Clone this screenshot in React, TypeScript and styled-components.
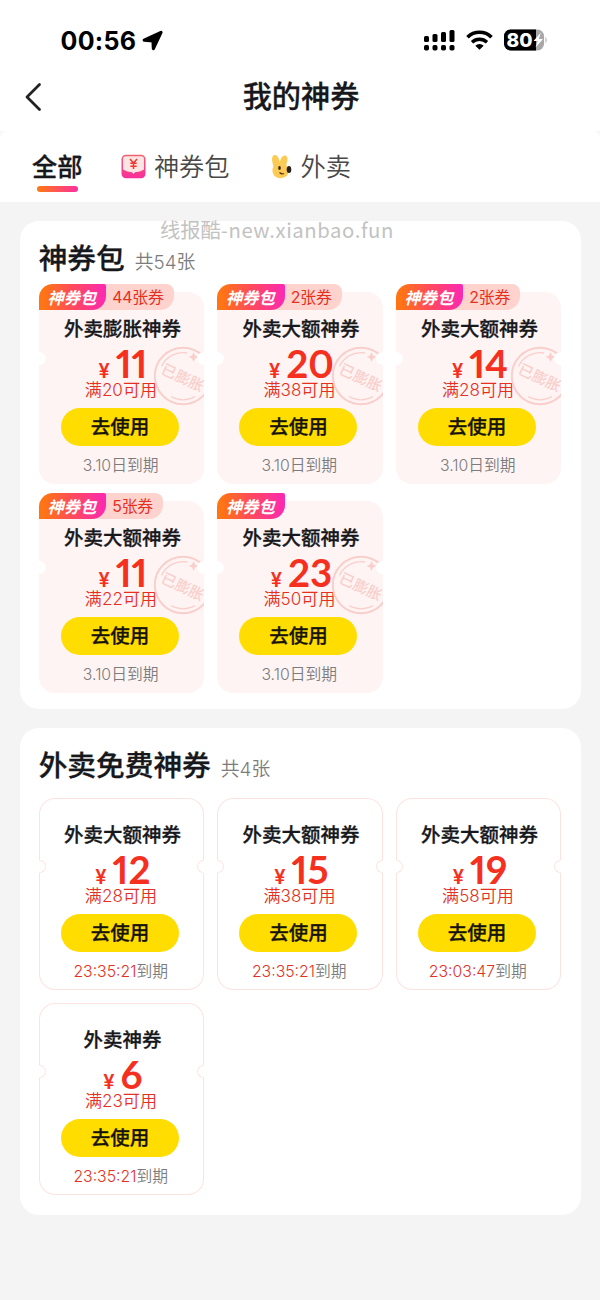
import React from "react";
import styled, { createGlobalStyle, css } from "styled-components";

const sans = `Inter, "Noto Sans CJK SC", sans-serif`;

const GlobalStyle = createGlobalStyle`
  * { box-sizing: border-box; }
  body { margin: 0; background: #f4f4f4; }
`;

const semibold = css`
  font-weight: 500;
  -webkit-text-stroke: 0.3px currentColor;
`;

const Page = styled.div`
  width: 600px;
  min-height: 1300px;
  background: #f4f4f4;
  font-family: ${sans};
  color: #16181c;
  position: relative;
`;

const Top = styled.header`
  background: #fff;
`;

const StatusBar = styled.div`
  height: 62px;
  padding: 20px 52px 0 60.5px;
  display: flex;
  justify-content: space-between;
`;

const Clock = styled.div`
  display: flex;
  align-items: center;
  gap: 6px;
  height: 42px;
  font-size: 25px;
  font-weight: 750;
  letter-spacing: 0.3px;
  color: #000;
`;

const Indicators = styled.div`
  display: flex;
  align-items: center;
  gap: 11px;
  height: 40px;
`;

const NavBar = styled.div`
  height: 69px;
  display: grid;
  grid-template-columns: 60px 1fr 60px;
  align-items: center;
  & > svg { margin-left: 24px; }
`;

const NavTitle = styled.h1`
  margin: 1px 0 0 2px;
  text-align: center;
  font-size: 29.2px;
  line-height: 40px;
  ${semibold}
`;

const TabsBackdrop = styled.div`
  background: #f8f8f8;
`;

const Tabs = styled.nav`
  height: 71px;
  padding: 17px 32px 0;
  display: flex;
  background: #fff;
  border-radius: 8px 8px 0 0;
`;

const Tab = styled.div<{ $active?: boolean; $gap?: number }>`
  display: flex;
  flex-direction: column;
  align-items: center;
  margin-right: ${(p) => p.$gap ?? 0}px;
  font-size: 25.2px;
  line-height: 38px;
  color: ${(p) => (p.$active ? "#16181c" : "#484848")};
  ${(p) => (p.$active ? semibold : css`font-weight: 350;`)}
`;

const TabLabel = styled.div`
  display: flex;
  align-items: center;
  gap: 7.5px;
  height: 37.5px;
`;

const Underline = styled.div`
  width: 41px;
  height: 6px;
  border-radius: 3px;
  background: linear-gradient(90deg, #ff7a10, #ff2fa0);
`;

const Watermark = styled.div`
  position: absolute;
  left: 160px;
  top: 214px;
  font: 400 20.3px/30px "Noto Sans CJK SC", sans-serif;
  white-space: nowrap;
  color: #c2c2c2;
`;

const WatermarkSite = styled.span`
  letter-spacing: 0.58px;
`;

const Panels = styled.main`
  padding: 19px 19.5px 0;
  display: flex;
  flex-direction: column;
  gap: 19px;
`;

const Panel = styled.section<{ $h: number }>`
  height: ${(p) => p.$h}px;
  padding: 16px 19.2px 0;
  border-radius: 19px;
  background: #fff;
`;

const PanelHead = styled.div<{ $h: number }>`
  height: ${(p) => p.$h}px;
  display: flex;
  align-items: baseline;
  gap: 10px;
`;

const PanelTitle = styled.h2`
  margin: 0;
  font-size: 28.7px;
  line-height: 43px;
  ${semibold}
`;

const PanelCount = styled.span`
  font-size: 18.8px;
  font-weight: 350;
  color: #7c7c7c;
`;

const Grid = styled.div<{ $row: number }>`
  display: grid;
  grid-template-columns: repeat(3, 1fr);
  column-gap: 13px;
  row-gap: ${(p) => p.$row}px;
`;

const Ticket = styled.article<{ $packed?: boolean }>`
  --edge: ${(p) => (p.$packed ? "transparent" : "#fde3e0")};
  position: relative;
  height: 192px;
  display: flex;
  flex-direction: column;
  align-items: center;
  border-radius: 16px;
  background: ${(p) => (p.$packed ? "#fff4f4" : "#fff")};
  box-shadow: inset 0 0 0 1px var(--edge);
`;

const Notch = styled.i<{ $side: "left" | "right"; $packed?: boolean }>`
  position: absolute;
  top: ${(p) => (p.$packed ? 60 : 62)}px;
  ${(p) => p.$side}: 0;
  width: 7px;
  height: 13px;
  background: #fff;
  border: 1px solid var(--edge);
  ${(p) =>
    p.$side === "left"
      ? css`border-left-color: #fff; border-radius: 0 7px 7px 0;`
      : css`border-right-color: #fff; border-radius: 7px 0 0 7px;`}
`;

const StampClip = styled.div`
  position: absolute;
  inset: 0;
  overflow: hidden;
  border-radius: 16px;
  & > svg { position: absolute; left: 114px; top: 53.5px; }
`;

const Ribbon = styled.div`
  position: absolute;
  left: 0;
  top: -8px;
  display: flex;
  height: 26px;
`;

const RibbonBrand = styled.span`
  position: relative;
  z-index: 1;
  width: 67.5px;
  padding-right: 1px;
  border-radius: 14px 2px 14px 0;
  background: linear-gradient(90deg, #ff7414 8%, #ff4a5c 50%, #fc28b4);
  color: #fff;
  text-align: center;
  font: italic 700 16.3px/26px "Noto Sans CJK SC", sans-serif;
`;

const RibbonCount = styled.span`
  margin-left: -12px;
  padding: 0 10px 0 18px;
  border-radius: 0 8px 14px 0;
  background: #fed3ce;
  color: #e5301f;
  font-size: 15.9px;
  font-weight: 400;
  letter-spacing: -0.2px;
  line-height: 28px;
`;

const Name = styled.div`
  margin-top: 21.5px;
  padding-left: 2px;
  font-size: 19.5px;
  line-height: 30px;
  ${semibold}
`;

const Price = styled.div`
  display: flex;
  align-items: baseline;
  gap: 6px;
  height: 36.5px;
  padding-left: 3px;
  color: #f5301f;
  line-height: 39px;
`;

const Yen = styled.span`
  font-size: 20px;
  font-weight: 600;
`;

const Amount = styled.span`
  font-family: Lato, sans-serif;
  font-weight: 700;
  font-size: 38.5px;
  font-feature-settings: "pnum";
`;

const Condition = styled.div`
  height: 28px;
  padding-right: 1px;
  font-size: 17.1px;
  line-height: 20px;
  font-weight: 350;
  color: #e5301f;
`;

const UseButton = styled.button`
  width: 118px;
  height: 38px;
  margin-right: 3px;
  padding: 0;
  border: 0;
  border-radius: 19px;
  background: #ffdd00;
  color: #16130a;
  font: 500 19.5px/38px ${sans};
  ${semibold}
`;

const Expiry = styled.div`
  margin-top: 7px;
  padding-right: 1.5px;
  font-size: 15.8px;
  line-height: 26px;
  font-weight: 350;
  color: #7c7c7c;
`;

const Timer = styled.span`
  color: #e5301f;
`;

interface Coupon {
  name: string;
  amount: string;
  floor: string;
  date?: string;
  timer?: string;
  packed?: boolean;
  count?: string;
}

const pack: Coupon[] = [
  { name: "外卖膨胀神券", amount: "11", floor: "20", date: "3.10日", packed: true, count: "44张券" },
  { name: "外卖大额神券", amount: "20", floor: "38", date: "3.10日", packed: true, count: "2张券" },
  { name: "外卖大额神券", amount: "14", floor: "28", date: "3.10日", packed: true, count: "2张券" },
  { name: "外卖大额神券", amount: "11", floor: "22", date: "3.10日", packed: true, count: "5张券" },
  { name: "外卖大额神券", amount: "23", floor: "50", date: "3.10日", packed: true },
];

const free: Coupon[] = [
  { name: "外卖大额神券", amount: "12", floor: "28", timer: "23:35:21" },
  { name: "外卖大额神券", amount: "15", floor: "38", timer: "23:35:21" },
  { name: "外卖大额神券", amount: "19", floor: "58", timer: "23:03:47" },
  { name: "外卖神券", amount: "6", floor: "23", timer: "23:35:21" },
];

const Stamp = () => (
  <svg width="60" height="60" viewBox="0 0 60 60" fill="none" stroke="#f9cfcb">
    <circle cx="30" cy="30" r="28.2" strokeWidth="2" />
    <path d="M8.5 20.5A23.5 23.5 0 0 1 34 7M18 50.5A23.5 23.5 0 0 0 42 50.5" strokeWidth="1.3" />
    <path d="M40.5 6l1.5 3.5 3.5 1.5-3.5 1.5-1.5 3.5-1.5-3.5-3.5-1.5 3.5-1.5z" fill="#f9cfcb" stroke="none" />
    <text
      x="30.5" y="37" textAnchor="middle" transform="rotate(25 30 30)"
      fontFamily="Noto Sans CJK SC, sans-serif" fontSize="15" fontWeight="500" fill="#f9cfcb" stroke="none"
    >
      已膨胀
    </text>
  </svg>
);

const CouponCard = ({ c }: { c: Coupon }) => (
  <Ticket $packed={c.packed}>
    {c.packed && <StampClip><Stamp /></StampClip>}
    <Notch $side="left" $packed={c.packed} />
    <Notch $side="right" $packed={c.packed} />
    {c.packed && (
      <Ribbon>
        <RibbonBrand>神券包</RibbonBrand>
        {c.count && <RibbonCount>{c.count}</RibbonCount>}
      </Ribbon>
    )}
    <Name>{c.name}</Name>
    <Price><Yen>¥</Yen><Amount>{c.amount}</Amount></Price>
    <Condition>满{c.floor}可用</Condition>
    <UseButton>去使用</UseButton>
    <Expiry>{c.timer && <Timer>{c.timer}</Timer>}{c.date}到期</Expiry>
  </Ticket>
);

const LocationArrow = () => (
  <svg width="22" height="22" viewBox="0 0 22 22">
    <path d="M2.2 10.2 19 2.4 11.4 18.6 11 11z" fill="#000" stroke="#000" strokeWidth="3.2" strokeLinejoin="round" />
  </svg>
);

const Signal = () => (
  <svg width="31" height="22" viewBox="0 0 31 22" fill="#000">
    <rect x="0" y="7" width="5" height="6" rx="1.5" />
    <rect x="8.5" y="5" width="5" height="8" rx="1.5" />
    <rect x="17" y="3" width="5" height="10" rx="1.5" />
    <rect x="25.5" y="1" width="5" height="12" rx="1.5" />
    {[0, 8.5, 17, 25.5].map((x) => <rect key={x} x={x} y="16" width="5" height="5.5" rx="1.7" />)}
  </svg>
);

const Wifi = () => (
  <svg width="27" height="20" viewBox="0 0 27 20" fill="none" stroke="#000">
    <path d="M1.5 7.2a17 17 0 0 1 24 0" strokeWidth="3.6" />
    <path d="M6 12.3a10.8 10.8 0 0 1 15 0" strokeWidth="3.3" />
    <path d="M9.3 15.8a6 6 0 0 1 8.4 0L13.5 19.8z" fill="#000" stroke="none" />
  </svg>
);

const Battery = () => (
  <svg width="44" height="22" viewBox="0 0 44 22">
    <defs><clipPath id="cell"><rect width="40" height="21" y=".5" rx="6.5" /></clipPath></defs>
    <g clipPath="url(#cell)">
      <rect width="44" height="22" fill="#a8a8a8" />
      <rect width="32" height="22" fill="#000" />
    </g>
    <path d="M41.5 7.5q2.2 3.5 0 7z" fill="#a8a8a8" />
    <text x="2.5" y="17.8" fontFamily="Inter, sans-serif" fontSize="19" fontWeight="800" fill="#fff" textLength="26" lengthAdjust="spacingAndGlyphs">80</text>
    <path d="M37 3.5 29.5 12h4.3L31.5 18.5 39 10h-4.3z" fill="#fff" />
  </svg>
);

const PackIcon = () => (
  <svg width="25" height="25" viewBox="0 0 25 25">
    <defs>
      <linearGradient id="pk" x1="0" y1="0" x2="0" y2="1">
        <stop offset="0" stopColor="#f2606c" /><stop offset="1" stopColor="#f92f9c" />
      </linearGradient>
    </defs>
    <rect x=".5" y=".8" width="24" height="23.4" rx="4.5" fill="url(#pk)" />
    <path d="M2 5q0-2.700 2.700-2.700h15.600Q23 2.300 23 5v10.500q-4 2.500-9 2.700l-1.500 1.800-1.500-1.800q-5-.2-9-2.700z" fill="#fde5e4" />
    <path d="M9 5l3.500 4L16 5M12.500 9v6M9.300 9.300h6.400M9.300 12.200h6.400" stroke="#ee3a35" strokeWidth="1.5" fill="none" />
  </svg>
);

const BunnyIcon = () => (
  <svg width="22" height="25" viewBox="0 0 22 25">
    <path d="M2.5 12C1 8 0 3 2.8 1.200 6.500-.3 7.800 4 8.800 8 10 4 11.500.5 14.500 1.600c3.300 1.600 1.700 6.400.6 9.400 3 3 3.400 8 .9 10.500-4 4-10.800 3.300-13.300-.5-1.700-3-1.700-6-.2-9z" fill="#fccb55" />
    <ellipse cx="8.5" cy="14" rx="1.3" ry="2" fill="#332414" />
    <ellipse cx="18" cy="15.5" rx="2.3" ry="3.6" fill="#26211c" />
    <path d="M8.500 18.500q2 2 4.500 1" stroke="#5a3510" strokeWidth="1.2" fill="none" />
  </svg>
);

export default function App() {
  return (
    <Page>
      <GlobalStyle />
      <Top>
        <StatusBar>
          <Clock>00:56<LocationArrow /></Clock>
          <Indicators><Signal /><Wifi /><Battery /></Indicators>
        </StatusBar>
        <NavBar>
          <svg width="20" height="30" viewBox="0 0 20 30" fill="none" stroke="#222" strokeWidth="2.8" strokeLinecap="round" strokeLinejoin="round">
            <path d="M15.5 2.5 3 15l12.5 12.5" />
          </svg>
          <NavTitle>我的神券</NavTitle>
        </NavBar>
        <TabsBackdrop>
          <Tabs>
            <Tab $active $gap={39}><TabLabel>全部</TabLabel><Underline /></Tab>
            <Tab $gap={41.5}><TabLabel><PackIcon />神券包</TabLabel></Tab>
            <Tab><TabLabel><BunnyIcon />外卖</TabLabel></Tab>
          </Tabs>
        </TabsBackdrop>
      </Top>
      <Panels>
        <Panel $h={488}>
          <PanelHead $h={55}><PanelTitle>神券包</PanelTitle><PanelCount>共54张</PanelCount></PanelHead>
          <Grid $row={17}>{pack.map((c, i) => <CouponCard key={i} c={c} />)}</Grid>
        </Panel>
        <Panel $h={487}>
          <PanelHead $h={54}><PanelTitle>外卖免费神券</PanelTitle><PanelCount>共4张</PanelCount></PanelHead>
          <Grid $row={13}>{free.map((c, i) => <CouponCard key={i} c={c} />)}</Grid>
        </Panel>
      </Panels>
      <Watermark>线报酷<WatermarkSite>-new.xianbao.fun</WatermarkSite></Watermark>
    </Page>
  );
}
